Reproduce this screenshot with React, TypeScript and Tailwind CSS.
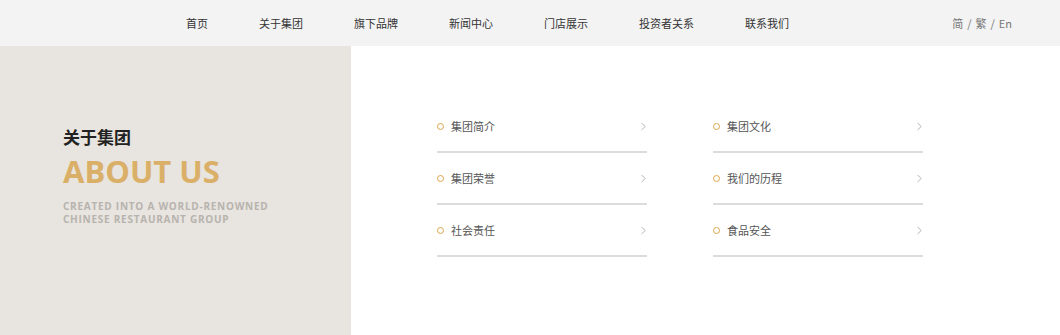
import { ChevronRight } from "lucide-react";

const nav = ["首页", "关于集团", "旗下品牌", "新闻中心", "门店展示", "投资者关系", "联系我们"];

const items = [
  ["集团简介", "集团文化"],
  ["集团荣誉", "我们的历程"],
  ["社会责任", "食品安全"],
];

const cjk = { fontFamily: '"Microsoft YaHei", "Noto Sans CJK SC", sans-serif' };

function Item({ label }: { label: string }) {
  return (
    <a className="flex h-[52px] w-[210px] items-center border-b-2 border-[#dcdcdc] pt-[1px]">
      <span className="mr-[7px] h-[7px] w-[7px] rounded-full border-[1.5px] border-[#dfa54a]" />
      <span className="flex-1 text-[11px] text-[#555]">{label}</span>
      <ChevronRight size={13} strokeWidth={1.6} className="-mr-[3px] text-[#a8a8a8]" />
    </a>
  );
}

export default function App() {
  return (
    <div className="h-[335px] w-[1060px] overflow-hidden bg-white" style={cjk}>
      <header className="flex h-[46px] items-center bg-[#f3f3f3]">
        <nav className="ml-[186px] flex gap-[51px] text-[11px] text-[#333]">
          {nav.map((n) => (
            <span key={n}>{n}</span>
          ))}
        </nav>
        <div className="ml-auto mr-[48px] flex items-center gap-[4px] text-[11px] text-[#777]">
          <span>简</span>
          <span>/</span>
          <span>繁</span>
          <span>/</span>
          <span>En</span>
        </div>
      </header>
      <div className="flex h-[289px]">
        <aside className="w-[351px] bg-[#e8e4df] pl-[63px] pt-[81px]">
          <h2 className="text-[17px] font-bold leading-[20px] text-[#222]">关于集团</h2>
          <h1
            className="mt-[6px] text-[31px] font-bold leading-[36px] text-[#dab068]"
            style={{ fontFamily: '"Open Sans", sans-serif' }}
          >
            ABOUT US
          </h1>
          <p
            className="mt-[11px] text-[10px] font-bold leading-[13px] tracking-[0.75px] text-[#b7b3ae]"
            style={{ fontFamily: '"Open Sans", sans-serif' }}
          >
            CREATED INTO A WORLD-RENOWNED
            <br />
            CHINESE RESTAURANT GROUP
          </p>
        </aside>
        <main className="flex-1 pl-[86px] pt-[55px]">
          <div className="flex flex-col">
            {items.map(([a, b]) => (
              <div key={a} className="flex gap-[66px]">
                <Item label={a} />
                <Item label={b} />
              </div>
            ))}
          </div>
        </main>
      </div>
    </div>
  );
}
